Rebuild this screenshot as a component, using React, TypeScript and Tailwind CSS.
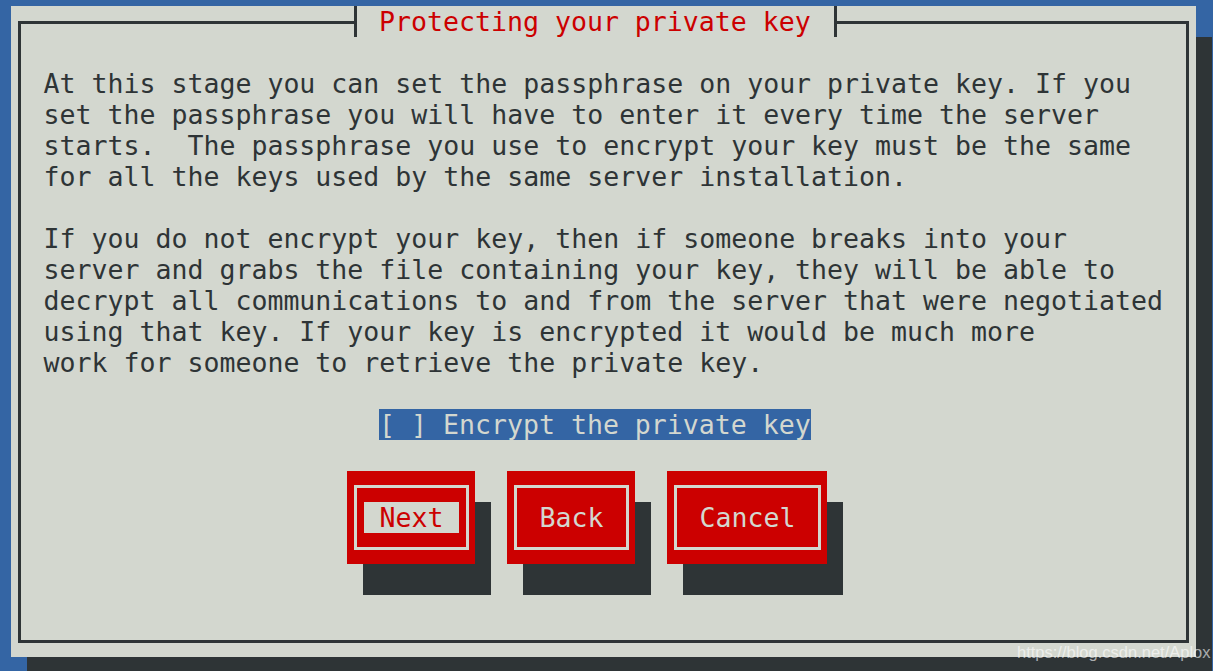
const mono = { fontFamily: '"DejaVu Sans Mono", "Liberation Mono", monospace' };

const para1 = [
  "At this stage you can set the passphrase on your private key. If you",
  "set the passphrase you will have to enter it every time the server",
  "starts.  The passphrase you use to encrypt your key must be the same",
  "for all the keys used by the same server installation.",
];

const para2 = [
  "If you do not encrypt your key, then if someone breaks into your",
  "server and grabs the file containing your key, they will be able to",
  "decrypt all communications to and from the server that were negotiated",
  "using that key. If your key is encrypted it would be much more",
  "work for someone to retrieve the private key.",
];

function Line({ text }: { text: string }) {
  return <div className="h-[31px] leading-[31px] whitespace-pre">{text}</div>;
}

function Button({ label, width, focused }: { label: string; width: string; focused?: boolean }) {
  return (
    <div className={`${width} h-[93px] bg-[#cc0000] pl-[7px] pr-[6px] py-[14px] shadow-[16px_31px_0_#2e3436]`}>
      <div className="h-full border-[3px] border-[#d3d7cf] flex items-center justify-center">
        <span
          className={
            focused
              ? "h-[31px] leading-[31px] whitespace-pre bg-[#d3d7cf] text-[#cc0000]"
              : "h-[31px] leading-[31px] whitespace-pre text-[#d3d7cf]"
          }
        >
          {` ${label} `}
        </span>
      </div>
    </div>
  );
}

export default function App() {
  return (
    <div className="relative w-[1213px] h-[671px] overflow-hidden bg-[#3465a4]" style={mono}>
      <div className="relative ml-[11px] mt-[6px] pt-[15px] pl-[7px] w-[1185px] h-[651px] bg-[#d3d7cf] shadow-[16px_31px_0_#2e3436] text-[26.57px] text-[#2e3436]">
        {/* title */}
        <div className="absolute left-[343px] top-0 w-[483px] h-[31px] bg-[#d3d7cf] border-x-[3px] border-[#2e3436] pl-[22px] leading-[31px] whitespace-pre text-[#cc0000]">
          Protecting your private key
        </div>

        <div className="w-[1171px] h-[622px] border-[3px] border-[#2e3436] pt-[44px] pl-[22.5px]">
          {para1.map((t, i) => (
            <Line key={"a" + i} text={t} />
          ))}
          <div className="h-[31px]" />
          {para2.map((t, i) => (
            <Line key={"b" + i} text={t} />
          ))}
          <div className="h-[31px]" />
          <div className="ml-[335.5px] w-[432px] h-[31px] leading-[31px] whitespace-pre bg-[#3465a4] text-[#d3d7cf]">
            [ ] Encrypt the private key
          </div>
          <div className="h-[31px]" />
          <div className="ml-[303.5px] flex gap-[32px]">
            <Button label="Next" width="w-[128px]" focused />
            <Button label="Back" width="w-[128px]" />
            <Button label="Cancel" width="w-[160px]" />
          </div>
        </div>
      </div>

      <div
        className="absolute left-[1017px] top-[642px] text-[16.5px] leading-[20px] text-white/60"
        style={{ fontFamily: '"Liberation Sans", Arial, sans-serif' }}
      >
        https://blog.csdn.net/Aplox
      </div>
    </div>
  );
}
